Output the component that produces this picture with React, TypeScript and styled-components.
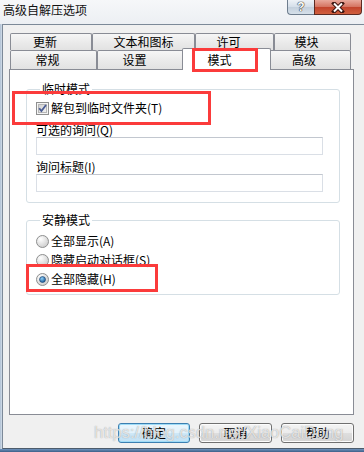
import * as React from "react";
import styled, { createGlobalStyle } from "styled-components";

const GlobalStyle = createGlobalStyle`
  html, body {
    margin: 0;
    padding: 0;
    background: #f0f0f0;
  }
  body {
    font-family: "Noto Sans CJK SC", "Liberation Sans", sans-serif;
    font-size: 12px;
    color: #000;
  }
  * { box-sizing: border-box; }
`;

const Window = styled.div`
  position: relative;
  width: 364px;
  height: 452px;
  display: flex;
  flex-direction: column;
  background: linear-gradient(to right, #aebfd2, #d3deea 2px);
  overflow: hidden;
`;

const TitleBar = styled.div`
  height: 24px;
  flex: none;
  display: flex;
  align-items: flex-start;
  justify-content: space-between;
  background: linear-gradient(#f6f7f9, #eceff3);
`;

const Caption = styled.div`
  padding: 3px 0 0 3px;
  line-height: 14px;
  font-size: 12px;
  color: #111;
`;

const CaptionButtons = styled.div`
  display: flex;
  margin-right: 2px;
`;

const HelpButton = styled.div`
  width: 27px;
  height: 15px;
  border: 1px solid #6e7d8e;
  border-top: none;
  border-right: none;
  border-radius: 0 0 0 4px;
  background: linear-gradient(#eef2f7, #d4dee9 50%, #c3cfdc 51%, #d6e0ea);
  display: flex;
  align-items: center;
  justify-content: center;
  color: #fff;
  font: bold 12px "Liberation Sans", sans-serif;
  text-shadow: 0 0 1px #333, 0 0 1px #333, 0 0 1px #333;
`;

const CloseButton = styled.div`
  width: 48px;
  height: 15px;
  border: 1px solid #5c2a22;
  border-top: none;
  border-radius: 0 0 4px 0;
  background: linear-gradient(#e9a99c, #d4725f 50%, #c2432c 51%, #d0603f);
  display: flex;
  align-items: center;
  justify-content: center;
`;

const Client = styled.div`
  flex: 1;
  margin-left: 2px;
  background: #f0f0f0;
  border-left: 1px solid #7c8998;
  border-top: 1px solid #7c8998;
  border-bottom: 1px solid #4d5c6c;
  padding: 8px 10px 0 6px;
  display: flex;
  flex-direction: column;
`;

const BottomEdge = styled.div`
  height: 3px;
  flex: none;
  background: linear-gradient(#6f93bd, #3d5f88);
`;

const TabRow = styled.div<{ $h: number }>`
  display: flex;
  margin-left: 1px;
  height: ${(p) => p.$h}px;
  position: relative;
`;

const Tab = styled.div<{ $w: number; $active?: boolean; $pr?: number }>`
  width: ${(p) => p.$w}px;
  flex: none;
  border: 1px solid #898c95;
  border-bottom: none;
  background: ${(p) =>
    p.$active ? "#fff" : "linear-gradient(#f6f6f6, #ebebeb 50%, #e2e2e2)"};
  display: flex;
  align-items: center;
  justify-content: center;
  padding-right: ${(p) => (p.$pr === undefined ? 12 : p.$pr)}px;
  line-height: 14px;
  font-size: 12px;
  position: relative;
  z-index: ${(p) => (p.$active ? 2 : 1)};
  margin: ${(p) => (p.$active ? "-2px -2px -1px -2px" : "0")};
  border-radius: 2px 2px 0 0;
`;

const Panel = styled.div`
  width: 345px;
  height: 346px;
  flex: none;
  border: 1px solid #898c95;
  background: #fff;
  display: flex;
  flex-direction: column;
`;

const GroupBox = styled.fieldset<{ $mt: number; $pb: number }>`
  margin: ${(p) => p.$mt}px 13px 0 16px;
  padding: 0 0 ${(p) => p.$pb}px 9px;
  border: 1px solid #d5dfe5;
  border-radius: 3px;
  min-width: 0;
  display: flex;
  flex-direction: column;
`;

const Legend = styled.legend`
  margin-left: 4px;
  padding: 0 2px;
  line-height: 14px;
  font-size: 12px;
`;

const OptionRow = styled.div<{ $mt: number }>`
  display: flex;
  align-items: center;
  gap: 2px;
  height: 14px;
  margin-top: ${(p) => p.$mt}px;
  line-height: 14px;
`;

const FieldLabel = styled.div<{ $mt: number }>`
  height: 14px;
  line-height: 14px;
  margin-top: ${(p) => p.$mt}px;
`;

const TextBox = styled.div<{ $mt: number }>`
  width: 287px;
  height: 18px;
  margin-top: ${(p) => p.$mt}px;
  border: 1px solid #dadfe6;
  border-top-color: #c2c7cf;
  background: #fff;
`;

const ButtonRow = styled.div`
  display: flex;
  justify-content: flex-end;
  gap: 9px;
  margin-top: 8px;
  width: 345px;
`;

const Button = styled.div<{ $w: number; $default?: boolean }>`
  width: ${(p) => p.$w}px;
  height: 20px;
  border: 1px solid ${(p) => (p.$default ? "#3c7fb1" : "#707070")};
  border-radius: 3px;
  background: ${(p) =>
    p.$default
      ? "linear-gradient(#eaf6fd, #e3f2fb 50%, #cfe8f7 51%, #c1e1f5)"
      : "linear-gradient(#f4f4f4, #ececec 50%, #dedede 51%, #d3d3d3)"};
  box-shadow: ${(p) =>
    p.$default ? "inset 0 0 0 1px #9fdcf7" : "inset 0 0 0 1px #fcfcfc"};
  display: flex;
  align-items: center;
  justify-content: center;
  line-height: 14px;
  font-size: 12px;
`;

const Highlight = styled.div<{ $x: number; $y: number; $w: number; $h: number }>`
  position: absolute;
  left: ${(p) => p.$x}px;
  top: ${(p) => p.$y}px;
  width: ${(p) => p.$w}px;
  height: ${(p) => p.$h}px;
  border: 3px solid #fb3b3b;
  z-index: 10;
`;

const Watermark = styled.div`
  position: absolute;
  left: 94px;
  top: 423px;
  font: 16.5px "Liberation Sans", Arial, sans-serif;
  color: rgba(255, 255, 255, 0.7);
  text-shadow: 0 0 1px rgba(110, 110, 110, 0.7);
  white-space: nowrap;
  z-index: 11;
`;

const CheckBox: React.FC = () => (
  <svg width="13" height="13" viewBox="0 0 13 13">
    <defs>
      <linearGradient id="cbg" x1="0" y1="0" x2="1" y2="1">
        <stop offset="0" stopColor="#cfcfcf" />
        <stop offset="1" stopColor="#f4f4f4" />
      </linearGradient>
    </defs>
    <rect x="0.5" y="0.5" width="12" height="12" fill="#f4f4f4" stroke="#8e8f8f" />
    <rect x="2.5" y="2.5" width="8" height="8" fill="url(#cbg)" stroke="#b6b6b6" />
    <path d="M3.2 6.3 L5.4 9 L10 3" fill="none" stroke="#4a5c94" strokeWidth="1.8" />
  </svg>
);

const Radio: React.FC<{ checked?: boolean }> = ({ checked }) => (
  <svg width="13" height="13" viewBox="0 0 13 13">
    <defs>
      <radialGradient id="rbg" cx="0.35" cy="0.3" r="0.8">
        <stop offset="0" stopColor="#ffffff" />
        <stop offset="1" stopColor="#c9c9c9" />
      </radialGradient>
      <radialGradient id="rdot" cx="0.4" cy="0.35" r="0.7">
        <stop offset="0" stopColor="#8fd0f7" />
        <stop offset="1" stopColor="#0f4f93" />
      </radialGradient>
    </defs>
    <circle cx="6.5" cy="6.5" r="6" fill="url(#rbg)" stroke="#8e8f8f" />
    {checked && <circle cx="6.5" cy="6.5" r="3" fill="url(#rdot)" stroke="#1c3f6a" strokeWidth="0.6" />}
  </svg>
);

const App: React.FC = () => {
  return (
    <>
      <GlobalStyle />
      <Window>
        <TitleBar>
          <Caption>高级自解压选项</Caption>
          <CaptionButtons>
            <HelpButton>?</HelpButton>
            <CloseButton>
              <svg width="14" height="11" viewBox="0 0 14 11">
                <path d="M3 1.5 L11 9.5 M11 1.5 L3 9.5" stroke="#3b1510" strokeWidth="4" strokeLinecap="square" />
                <path d="M3 1.5 L11 9.5 M11 1.5 L3 9.5" stroke="#fff" strokeWidth="2" />
              </svg>
            </CloseButton>
          </CaptionButtons>
        </TitleBar>

        <Client>
          <TabRow $h={17}>
            <Tab $w={82}>更新</Tab>
            <Tab $w={103} $pr={0}>文本和图标</Tab>
            <Tab $w={79}>许可</Tab>
            <Tab $w={77}>模块</Tab>
          </TabRow>
          <TabRow $h={19}>
            <Tab $w={87}>常规</Tab>
            <Tab $w={87}>设置</Tab>
            <Tab $w={89} $active $pr={14}>模式</Tab>
            <Tab $w={82}>高级</Tab>
          </TabRow>

          <Panel>
            <GroupBox $mt={12} $pb={10}>
              <Legend>临时模式</Legend>
              <OptionRow $mt={5}>
                <CheckBox />
                解包到临时文件夹(T)
              </OptionRow>
              <FieldLabel $mt={8}>可选的询问(Q)</FieldLabel>
              <TextBox $mt={0} />
              <FieldLabel $mt={5}>询问标题(I)</FieldLabel>
              <TextBox $mt={0} />
            </GroupBox>

            <GroupBox $mt={10} $pb={8}>
              <Legend>安静模式</Legend>
              <OptionRow $mt={7}>
                <Radio />
                全部显示(A)
              </OptionRow>
              <OptionRow $mt={5}>
                <Radio />
                隐藏启动对话框(S)
              </OptionRow>
              <OptionRow $mt={5}>
                <Radio checked />
                全部隐藏(H)
              </OptionRow>
            </GroupBox>
          </Panel>

          <ButtonRow>
            <Button $w={72} $default>确定</Button>
            <Button $w={73}>取消</Button>
            <Button $w={73}>帮助</Button>
          </ButtonRow>
        </Client>
        <BottomEdge />

        <Highlight $x={192} $y={48} $w={66} $h={24} />
        <Highlight $x={12} $y={91} $w={199} $h={34} />
        <Highlight $x={26} $y={264} $w={132} $h={28} />
        <Watermark>https://blog.csdn.net/XiaoCaiDong</Watermark>
      </Window>
    </>
  );
};

export default App;
